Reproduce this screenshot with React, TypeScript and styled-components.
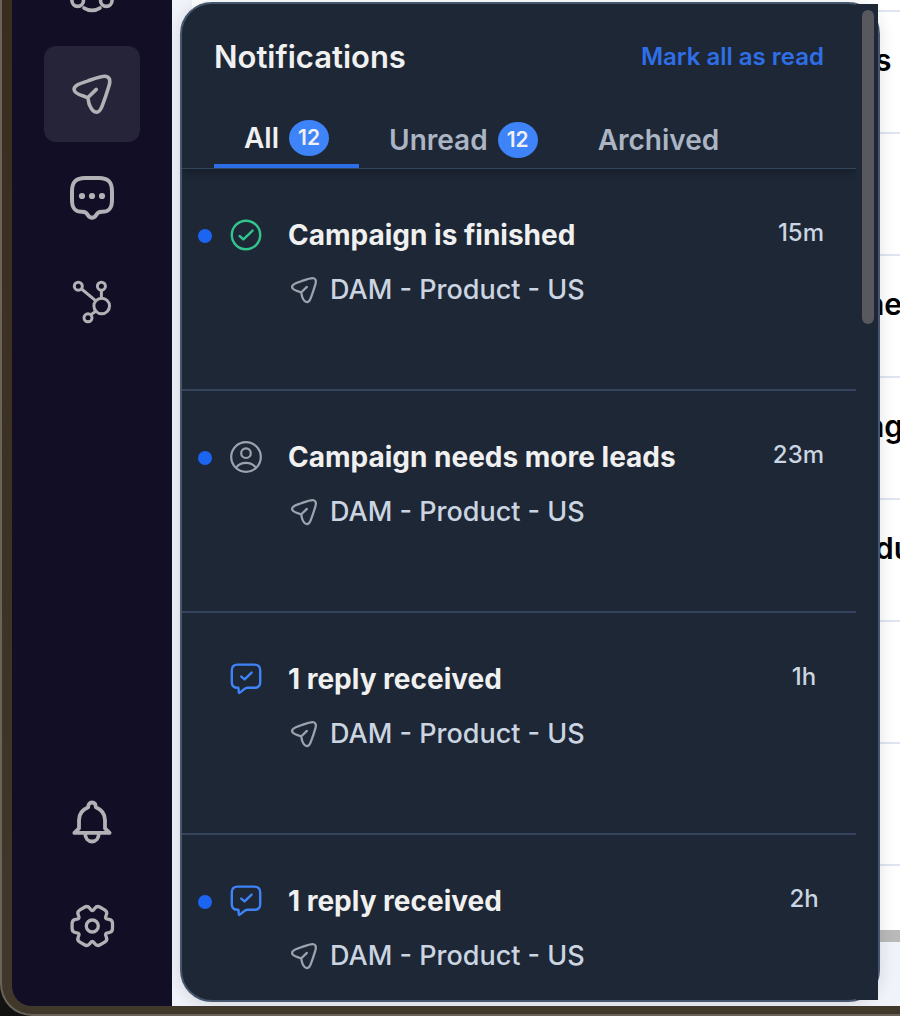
import React from "react";
import styled, { createGlobalStyle } from "styled-components";

const GlobalStyle = createGlobalStyle`
  *, *::before, *::after { box-sizing: border-box; }
  body {
    margin: 0;
    background: #121210;
    font-family: Inter, "Liberation Sans", sans-serif;
    -webkit-font-smoothing: antialiased;
  }
  button {
    margin: 0;
    padding: 0;
    border: 0;
    background: none;
    font: inherit;
    color: inherit;
    cursor: pointer;
  }
  h1, h2, p, ul { margin: 0; padding: 0; }
  ul { list-style: none; }
  svg { display: block; flex: none; }
`;

/* ---------- window ---------- */

const Frame = styled.div`
  display: flex;
  height: 100vh;
  padding: 0 0 8px 10px;
  border: solid #69635a;
  border-width: 0 0 2px 2px;
  border-bottom-left-radius: 32px;
  background: linear-gradient(#392d1e, #40382a);
  overflow: hidden;
`;

const Sidebar = styled.nav`
  display: flex;
  flex-direction: column;
  justify-content: space-between;
  align-items: center;
  flex: none;
  width: 160px;
  padding-bottom: 32px;
  border-bottom-left-radius: 20px;
  background: #110e25;
  overflow: hidden;
`;

const NavGroup = styled.div<{ $scrolled?: boolean }>`
  display: flex;
  flex-direction: column;
  gap: 8px;
  margin-top: ${(p) => (p.$scrolled ? "-58px" : "0")};
`;

const NavButton = styled.button<{ $active?: boolean }>`
  display: grid;
  place-items: center;
  width: 96px;
  height: 96px;
  border-radius: 12px;
  color: #b2b1b5;
  background: ${(p) => (p.$active ? "#252438" : "transparent")};
`;

const Main = styled.main`
  position: relative;
  flex: 1;
  min-width: 0;
  padding-left: 20px;
  background: #f0f3f9;
  overflow: hidden;
`;

/* ---------- table behind the panel ---------- */

const Table = styled.table`
  width: 100%;
  table-layout: fixed;
  border-collapse: separate;
  border-spacing: 0;
  background: #ffffff;
`;

const Cell = styled.td<{ $inset?: boolean; $edge?: "first" | "last" }>`
  height: ${(p) => (p.$edge === "first" ? 12 : p.$edge === "last" ? 64 : 122)}px;
  padding: 0 0 ${(p) => (p.$edge ? 0 : 24)}px ${(p) => (p.$inset ? 683 : 674)}px;
  border-bottom: ${(p) => (p.$edge === "last" ? "0" : "2px solid #dfe5f0")};
  color: #000000;
  font-size: 30px;
  font-weight: 600;
  line-height: 36px;
  white-space: nowrap;
  overflow: hidden;
`;

const TableScroll = styled.div`
  height: 12px;
  background: #b9b9ba;
`;

/* ---------- notification panel ---------- */

const Panel = styled.section`
  position: absolute;
  top: 2px;
  bottom: 4px;
  left: 8px;
  display: flex;
  width: calc(100% - 28px);
  max-width: 700px;
  border: 2px solid #46566c;
  border-radius: 32px;
  background: #1e2735;
  box-shadow: 0 2px 16px rgba(30, 41, 59, 0.14);
`;

const PanelBody = styled.div`
  display: flex;
  flex-direction: column;
  flex: 1;
  min-width: 0;
  overflow: hidden;
  border-radius: 30px 0 0 30px;
`;

const Gutter = styled.div`
  flex: none;
  width: 22px;
  padding: 6px 4px 10px 6px;
  background: #1e2735;
`;

const Thumb = styled.div`
  height: 32%;
  border-radius: 6px;
  background: #57595f;
`;

const PanelHeader = styled.header`
  position: relative;
  flex: none;
  padding: 32px 32px 0;
  border-bottom: 1px solid #334558;
  box-shadow: 0 2px 8px rgba(8, 18, 24, 0.5);
`;

const TitleRow = styled.div`
  display: flex;
  align-items: center;
  justify-content: space-between;
  height: 42px;
`;

const Heading = styled.h1`
  color: #f0f0f0;
  font-size: 31px;
  font-weight: 600;
  line-height: 42px;
`;

const MarkRead = styled.button`
  color: #2e6fe8;
  font-size: 24px;
  font-weight: 600;
  line-height: 32px;
`;

const Tabs = styled.div`
  display: flex;
  height: 60px;
  margin-top: 30px;
`;

const Tab = styled.button<{ $active?: boolean }>`
  display: flex;
  align-items: center;
  gap: 10px;
  padding: 4px 30px 0;
  border-bottom: ${(p) => (p.$active ? "4px solid #2e6fe8" : "0")};
  color: ${(p) => (p.$active ? "#f0f0f0" : "#abb5c4")};
  font-size: 28px;
  font-weight: 600;
  line-height: 36px;
`;

const Badge = styled.span`
  width: 40px;
  height: 36px;
  border-radius: 50%;
  background: #3f83f8;
  color: #f0f0f0;
  font-size: 21px;
  font-weight: 600;
  line-height: 36px;
  text-align: center;
`;

const List = styled.ul`
  flex: 1;
  min-height: 0;
  overflow: hidden;
`;

const Item = styled.li`
  display: flex;
  align-items: flex-start;
  height: 222px;
  padding: 48px 32px 0 16px;
  border-bottom: 2px solid #35445c;
`;

const Marker = styled.span<{ $unread: boolean }>`
  flex: none;
  width: 14px;
  height: 14px;
  margin: 12px 18px 0 0;
  border-radius: 50%;
  background: ${(p) => (p.$unread ? "#1c64f2" : "transparent")};
`;

const ItemIcon = styled.span<{ $tone: string }>`
  flex: none;
  margin: 2px 26px 0 0;
  color: ${(p) => p.$tone};
`;

const ItemText = styled.div`
  display: flex;
  flex-direction: column;
  flex: 1;
  gap: 19px;
  min-width: 0;
`;

const ItemTitle = styled.h2`
  color: #f0f0f0;
  font-size: 28px;
  font-weight: 700;
  line-height: 36px;
  white-space: nowrap;
`;

const Source = styled.p`
  display: flex;
  align-items: center;
  gap: 10px;
  color: #cbd5e1;
  font-size: 27px;
  font-weight: 500;
  line-height: 36px;
  white-space: nowrap;
`;

const SourceIcon = styled.span`
  color: #9ca3af;
`;

const Time = styled.time`
  flex: none;
  min-width: 40px;
  color: #cbd5e1;
  font-size: 24px;
  font-weight: 500;
  line-height: 32px;
  text-align: center;
`;

/* ---------- icons ---------- */

type IconProps = { size: number; stroke: number; children: React.ReactNode; box?: number };

const Icon = ({ size, stroke, children, box = 48 }: IconProps) => (
  <svg
    width={size}
    height={size}
    viewBox={`0 0 ${box} ${box}`}
    fill="none"
    stroke="currentColor"
    strokeWidth={stroke}
    strokeLinecap="round"
    strokeLinejoin="round"
    aria-hidden="true"
  >
    {children}
  </svg>
);

const PeopleIcon = () => (
  <Icon size={48} stroke={3.6}>
    <circle cx="24" cy="12" r="7" />
    <circle cx="9.7" cy="34.6" r="5.8" />
    <circle cx="38.3" cy="34.6" r="5.8" />
    <path d="M16 42C20.5 45.2 27.5 45.2 32 42" />
  </Icon>
);

const PlaneIcon = ({ size, stroke }: { size: number; stroke: number }) => (
  <Icon size={size} stroke={stroke}>
    <path d="M19.7 27.8C17 25.8 6.6 24.8 6.1 19.6C5.7 14.8 14 13 20 10.9C27 8.4 34.4 5.4 38.4 6.4C42.3 7.4 42.3 11.6 41.1 15.6C39.2 22 36 31.4 34.1 36.2C32.6 40 31 42.2 28.6 42.2C25.5 42.2 22.6 37.6 21.4 34.7C20.3 32 20.7 30 19.7 27.8ZM19.7 27.8L28.3 19.4" />
  </Icon>
);

const ChatIcon = () => (
  <Icon size={48} stroke={4}>
    <path d="M4 17C4 8 8 4 17 4H31C40 4 44 8 44 17V26C44 35 40.5 37.8 34 37.8C30.5 37.8 30 38.6 28.2 41C25.9 44.7 22.1 44.7 19.8 41C18 38.6 17.5 37.8 14 37.8C7.5 37.8 4 35 4 26Z" />
    <g fill="currentColor" stroke="none">
      <circle cx="14" cy="22" r="3.1" />
      <circle cx="24" cy="22" r="3.1" />
      <circle cx="34" cy="22" r="3.1" />
    </g>
  </Icon>
);

const HubIcon = () => (
  <Icon size={48} stroke={3}>
    <circle cx="10.3" cy="8.2" r="4" />
    <circle cx="33.4" cy="8.2" r="4" />
    <circle cx="20" cy="39.8" r="4" />
    <circle cx="33.7" cy="28" r="7.8" />
    <path d="M13.6 11L27.6 22.6M33.4 12.4V20M23 36.6L27.8 33.2" />
  </Icon>
);

const BellIcon = () => (
  <Icon size={48} stroke={3.8}>
    <path d="M6.4 34.9L11 30.4V22C11 16 14.4 11.6 20.2 9.2C20.2 6.4 21.4 4.5 24 4.5C26.6 4.5 27.8 6.4 27.8 9.2C33.6 11.6 37 16 37 22V30.4L41.6 34.9Z" />
    <path d="M17.2 35.4C17.2 40.4 20.2 43.5 24 43.5C27.8 43.5 30.8 40.4 30.8 35.4" />
  </Icon>
);

/* Six-tooth outline: corner points are joined through rounded quadratic turns. */
const gearPath = (() => {
  const pts: [number, number, number][] = [];
  for (let i = 0; i < 6; i++) {
    const a = (i * Math.PI) / 3;
    const tooth: [number, number, number][] = [
      [20.2, -6.2, 3.6],
      [20.2, 6.2, 3.6],
      [12.4, 7.16, 3],
    ];
    for (const [x, y, r] of tooth) {
      pts.push([24.3 + x * Math.cos(a) - y * Math.sin(a), 24 + x * Math.sin(a) + y * Math.cos(a), r]);
    }
  }
  const toward = (p: number[], q: number[], d: number) => {
    const len = Math.hypot(q[0] - p[0], q[1] - p[1]);
    return `${(p[0] + ((q[0] - p[0]) * d) / len).toFixed(2)} ${(p[1] + ((q[1] - p[1]) * d) / len).toFixed(2)}`;
  };
  return (
    pts
      .map((p, i) => {
        const before = pts[(i + pts.length - 1) % pts.length];
        const after = pts[(i + 1) % pts.length];
        return `${i ? "L" : "M"}${toward(p, before, p[2])}Q${p[0].toFixed(2)} ${p[1].toFixed(2)} ${toward(p, after, p[2])}`;
      })
      .join("") + "Z"
  );
})();

const GearIcon = () => (
  <Icon size={48} stroke={3.3}>
    <path d={gearPath} />
    <circle cx="24.3" cy="24" r="6" />
  </Icon>
);

const DoneIcon = () => (
  <Icon size={32} box={32} stroke={2.4}>
    <circle cx="16" cy="16" r="14.2" />
    <path d="M9.6 17L13.4 20.4L22.6 11.6" />
  </Icon>
);

const PersonIcon = () => (
  <Icon size={32} box={32} stroke={2.2}>
    <circle cx="16" cy="16" r="14.8" />
    <circle cx="16" cy="12.2" r="4.8" />
    <path d="M6.2 26.4C8.6 23.4 12 21.8 16 21.8C20 21.8 23.4 23.4 25.8 26.4" />
  </Icon>
);

const ReplyIcon = () => (
  <Icon size={32} box={32} stroke={2.4}>
    <path d="M7.6 1.6H24.4C28.2 1.6 30.2 3.8 30.2 7.4V19.2C30.2 22.8 28.2 24.8 24.4 24.8H17C14 25.2 12 28.6 9.2 30C8.2 29.4 9 27 8.4 24.8H7.6C3.8 24.8 1.8 22.8 1.8 19.2V7.4C1.8 3.8 3.8 1.6 7.6 1.6Z" />
    <path d="M11.2 13.6L14.6 16.4L21.6 9.6" />
  </Icon>
);

/* ---------- data ---------- */

const rows = [
  { text: "s", inset: true },
  { text: "" },
  { text: "ne" },
  { text: "ng" },
  { text: "du", inset: true },
  { text: "" },
  { text: "" },
];

const kinds = {
  done: { icon: <DoneIcon />, tone: "#31c48d" },
  person: { icon: <PersonIcon />, tone: "#9ca3af" },
  reply: { icon: <ReplyIcon />, tone: "#3f83f8" },
};

const notifications: { kind: keyof typeof kinds; title: string; time: string; unread: boolean }[] = [
  { kind: "done", title: "Campaign is finished", time: "15m", unread: true },
  { kind: "person", title: "Campaign needs more leads", time: "23m", unread: true },
  { kind: "reply", title: "1 reply received", time: "1h", unread: false },
  { kind: "reply", title: "1 reply received", time: "2h", unread: true },
];

export default function App() {
  return (
    <>
      <GlobalStyle />
      <Frame>
        <Sidebar>
          <NavGroup $scrolled>
            <NavButton aria-label="People"><PeopleIcon /></NavButton>
            <NavButton aria-label="Campaigns" $active><PlaneIcon size={48} stroke={3.6} /></NavButton>
            <NavButton aria-label="Messages"><ChatIcon /></NavButton>
            <NavButton aria-label="Integrations"><HubIcon /></NavButton>
          </NavGroup>
          <NavGroup>
            <NavButton aria-label="Notifications"><BellIcon /></NavButton>
            <NavButton aria-label="Settings"><GearIcon /></NavButton>
          </NavGroup>
        </Sidebar>
        <Main>
          <Table>
            <tbody>
              <tr><Cell $edge="first" /></tr>
              {rows.map((row, i) => (
                <tr key={i}><Cell $inset={row.inset}>{row.text}</Cell></tr>
              ))}
              <tr><Cell $edge="last" /></tr>
            </tbody>
          </Table>
          <TableScroll />
          <Panel aria-label="Notifications">
            <PanelBody>
              <PanelHeader>
                <TitleRow>
                  <Heading>Notifications</Heading>
                  <MarkRead>Mark all as read</MarkRead>
                </TitleRow>
                <Tabs role="tablist">
                  <Tab role="tab" aria-selected="true" $active>All <Badge>12</Badge></Tab>
                  <Tab role="tab" aria-selected="false">Unread <Badge>12</Badge></Tab>
                  <Tab role="tab" aria-selected="false">Archived</Tab>
                </Tabs>
              </PanelHeader>
              <List>
                {notifications.map((n, i) => (
                  <Item key={i}>
                    <Marker $unread={n.unread} />
                    <ItemIcon $tone={kinds[n.kind].tone}>{kinds[n.kind].icon}</ItemIcon>
                    <ItemText>
                      <ItemTitle>{n.title}</ItemTitle>
                      <Source>
                        <SourceIcon><PlaneIcon size={32} stroke={3.4} /></SourceIcon>
                        DAM - Product - US
                      </Source>
                    </ItemText>
                    <Time>{n.time}</Time>
                  </Item>
                ))}
              </List>
            </PanelBody>
            <Gutter><Thumb /></Gutter>
          </Panel>
        </Main>
      </Frame>
    </>
  );
}
